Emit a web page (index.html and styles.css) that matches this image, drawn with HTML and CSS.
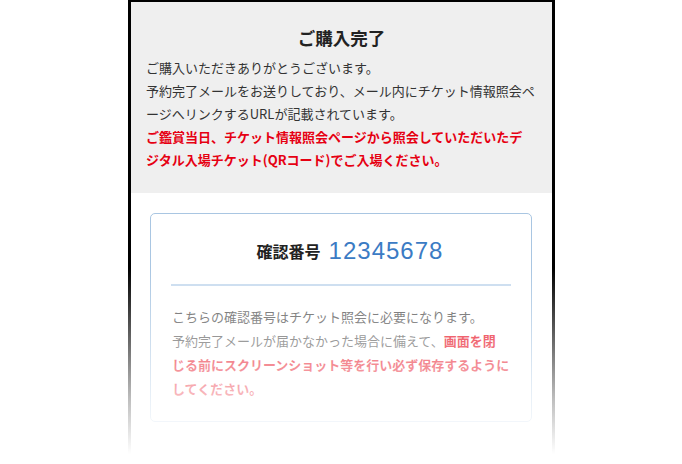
FILE: index.html
```html
<!DOCTYPE html>
<html lang="ja">
<head>
<meta charset="utf-8">
<title>ご購入完了</title>
<link rel="stylesheet" href="styles.css">
</head>
<body>
<div class="phone">
  <section class="intro">
    <h1 class="title">ご購入完了</h1>
    <p class="lead">ご購入いただきありがとうございます。<br>予約完了メールをお送りしており、メール内にチケット情報照会ペ<br>ージへリンクするURLが記載されています。</p>
    <p class="alert">ご鑑賞当日、チケット情報照会ページから照会していただいたデ<br>ジタル入場チケット(QRコード)でご入場ください。</p>
  </section>
  <section class="card">
    <div class="number-row">
      <span class="number-label">確認番号</span>
      <span class="number">12345678</span>
    </div>
    <hr class="divider">
    <p class="note">こちらの確認番号はチケット照会に必要になります。<br>予約完了メールが届かなかった場合に備えて、<strong class="note-alert">画面を閉<br>じる前にスクリーンショット等を行い必ず保存するように<br>してください。</strong></p>
  </section>
</div>
<div class="fade"></div>
</body>
</html>
```
FILE: styles.css
```css
html, body {
  height: 100%;
  overflow: hidden;
}
body {
  margin: 0;
  background: #fff;
  font-family: "Noto Sans CJK JP", "Noto Sans", sans-serif;
  position: relative;
}
.phone {
  box-sizing: border-box;
  margin-left: 128px;
  width: 427px;
  min-height: 100%;
  border: 3px solid #000;
  border-top-width: 2px;
  border-bottom: 0;
  background: #fff;
}
.intro {
  background: #efefef;
  padding: 24px 15px 22px;
}
.title {
  margin: 0 0 6px;
  text-align: center;
  font-size: 17.5px;
  line-height: 24px;
  font-weight: 700;
  color: #222;
}
.lead, .alert {
  margin: 0;
  font-size: 13px;
  line-height: 23px;
  white-space: nowrap;
}
.lead {
  color: #333;
}
.alert {
  color: #e60012;
  font-weight: 700;
}
.card {
  margin: 20px 20px 0 19px;
  border: 1px solid #a9c6e2;
  border-radius: 5px;
  padding: 22px 20px 20px;
}
.number-row {
  display: flex;
  justify-content: center;
  align-items: center;
  gap: 8px;
  height: 30px;
  padding-left: 18px;
}
.number-label {
  font-size: 16px;
  font-weight: 700;
  color: #222;
}
.number {
  font-family: "Liberation Sans", Arial, sans-serif;
  font-size: 24px;
  letter-spacing: 1px;
  color: #3b7bc4;
}
.divider {
  margin: 18px 0 0;
  border: 0;
  height: 2px;
  background: #c9dcef;
}
.note {
  margin: 19px 0 0 1px;
  font-size: 13px;
  line-height: 24px;
  color: #555;
  white-space: nowrap;
}
.note-alert {
  color: #e60012;
  font-weight: 700;
}
.fade {
  position: absolute;
  left: 0;
  right: 0;
  top: 268px;
  bottom: 0;
  background: linear-gradient(to bottom, rgba(255,255,255,0) 0, rgba(255,255,255,0.75) 132px, #fff 186px, #fff 100%);
  pointer-events: none;
}
```
